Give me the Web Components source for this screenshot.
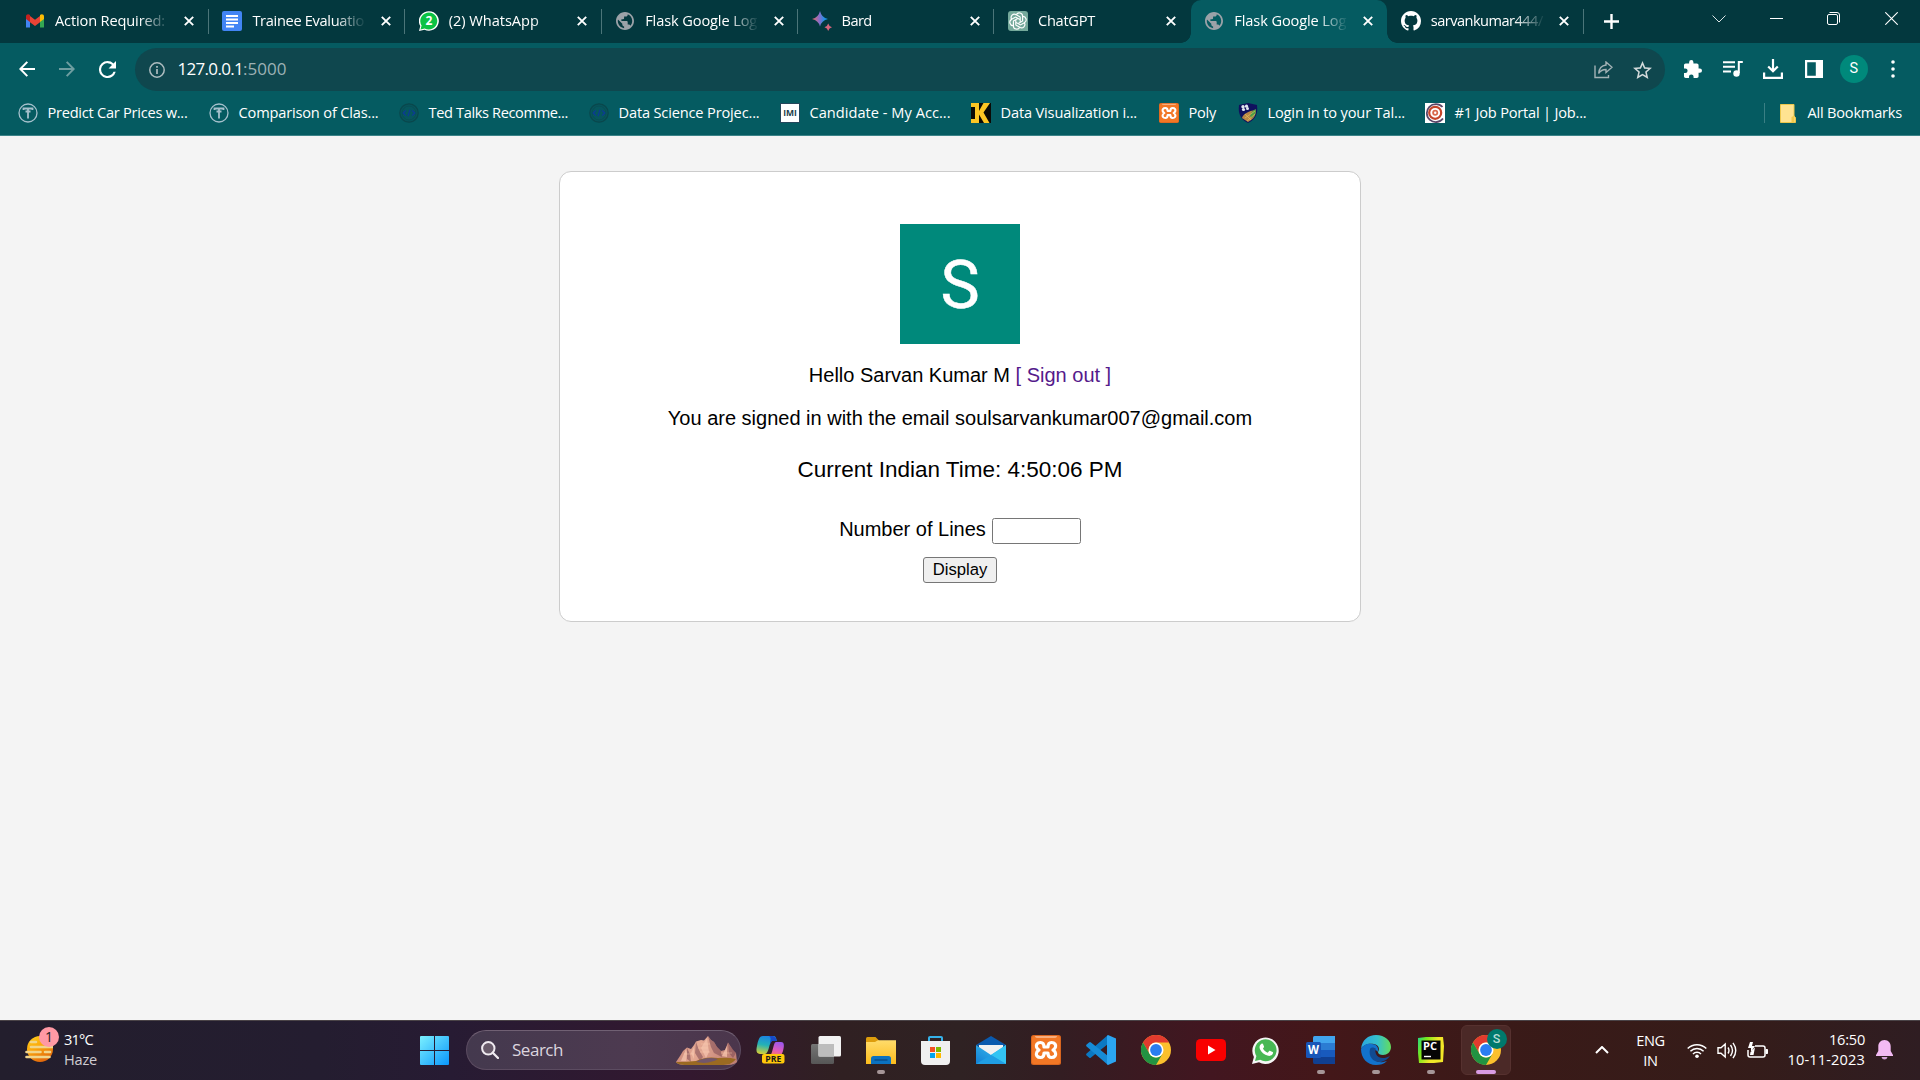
<!DOCTYPE html>
<html lang="en">
<head>
<meta charset="utf-8">
<title>Flask Google Login</title>
<style>
html,body{margin:0;height:100%;overflow:hidden}
body{font-family:"Open Sans","Noto Sans",sans-serif;width:1920px;height:1080px}
</style>
</head>
<body>
<desktop-screen></desktop-screen>
<script>
const GLOBE = '<path fill="#9ba2a8" d="M12 2C6.480 2 2 6.480 2 12s4.480 10 10 10 10-4.480 10-10S17.520 2 12 2zm-1 17.930c-3.950-.49-7-3.850-7-7.930 0-.62.080-1.210.210-1.790L9 15v1c0 1.100.9 2 2 2v1.930zm6.900-2.540c-.26-.81-1-1.390-1.900-1.390h-1v-3c0-.55-.45-1-1-1H8v-2h2c.55 0 1-.45 1-1V7h2c1.100 0 2-.9 2-2v-.41c2.930 1.190 5 4.060 5 7.410 0 2.080-.8 3.970-2.100 5.390z"/>';
const ICONS = {
  gmail: ['0 0 20 20', '<path d="M1 6v10.500h4V9z" fill="#4285f4"/><path d="M19 6v10.500h-4V9z" fill="#34a853"/><path d="M5 5v6.300l5 3.700 5-3.700V5l-5 3.800z" fill="#ea4335"/><path d="M1 5.500C1 3 3.500 2.500 5 4v7L1 8z" fill="#c5221f"/><path d="M19 5.500C19 3 16.500 2.500 15 4v7l4-3z" fill="#fbbc04"/>'],
  docs: ['0 0 20 20', '<rect width="20" height="20" rx="2" fill="#4285f4"/><path d="M4 5h12M4 8.500h12M4 12h12M4 15.500h8" stroke="#fff" stroke-width="2"/>'],
  wa2: ['0 0 20 20', '<path d="M0 20l1.300-5A10 9.700 0 1 1 5.500 18.700z" fill="#fff"/><path d="M1.500 18.500l1.100-4A8.500 8.500 0 1 1 5.700 17.400z" fill="#0ac244"/><text x="10" y="14.200" text-anchor="middle" font-family="Open Sans" font-size="12" font-weight="700" fill="#fff">2</text>'],
  globe: ['2 2 20 20', GLOBE],
  bard: ['0 0 20 20', '<defs><linearGradient id="g" x1="0" x2="1"><stop stop-color="#e86a62"/><stop offset=".45" stop-color="#8a6ec9"/><stop offset=".8" stop-color="#1b92e8"/></linearGradient></defs><path d="M8 0q1.500 6.500 8 8-6.500 1.500-8 7.500Q6.500 9.500 0 8q6.500-1.500 8-8z" fill="url(#g)"/><path d="M16.200 12.500q.8 3 3.800 3.800-3 .8-3.800 3.700-.8-2.900-3.700-3.700 2.900-.8 3.700-3.800z" fill="#d5657c"/>'],
  gpt: ['0 0 20 20', '<path d="M3 0h14a3 3 0 0 1 3 3v17H3a3 3 0 0 1-3-3V3a3 3 0 0 1 3-3z" fill="#74a99b"/><g fill="none" stroke="#fff" stroke-width="1.150">' + [0, 60, 120, 180, 240, 300].map(r => `<path transform="rotate(${r} 10 10)" d="M8.300 3.800a3.300 3.300 0 0 1 6.300 1.500v4.600l-4.300 2.500"/>`).join('') + '</g>'],
  github: ['0 0 16 16', '<path fill="#fff" d="M8 0C3.580 0 0 3.580 0 8c0 3.540 2.290 6.530 5.470 7.590.4.070.55-.17.55-.38 0-.19-.01-.82-.01-1.490-2.010.37-2.530-.49-2.690-.94-.09-.23-.48-.94-.82-1.130-.28-.15-.68-.52-.01-.53.63-.01 1.080.58 1.230.82.72 1.210 1.870.87 2.330.66.07-.52.28-.87.51-1.070-1.780-.2-3.640-.89-3.640-3.950 0-.87.31-1.590.82-2.150-.08-.2-.36-1.020.08-2.120 0 0 .67-.21 2.200.82.64-.18 1.320-.27 2-.27s1.360.09 2 .27c1.530-1.040 2.200-.82 2.200-.82.44 1.100.16 1.920.08 2.120.51.56.82 1.270.82 2.150 0 3.070-1.870 3.750-3.650 3.950.29.25.54.73.54 1.480 0 1.070-.01 1.930-.01 2.200 0 .21.15.46.55.38A8.010 8.010 0 0 0 16 8c0-4.420-3.580-8-8-8z"/>'],
  x: ['0 0 10 10', '<path d="M.8.800l8.400 8.400M9.200.800L.8 9.200" stroke="#fff" stroke-width="1.900"/>'],
  plus: ['0 0 15 15', '<path d="M7.500 0v15M0 7.500h15" stroke="#fff" stroke-width="2.400"/>'],
  chev: ['0 0 14 8', '<path d="M.5.500L7 7 13.500.500" fill="none" stroke="#dbe5e6" stroke-width="1"/>'],
  min: ['0 0 13 13', '<path d="M0 6.500h13" stroke="#fff" stroke-width="1"/>'],
  max: ['0 0 13 13', '<rect x=".5" y="2.500" width="10" height="10" rx="1.500" fill="none" stroke="#fff"/><path d="M2.500.500H10a2.500 2.500 0 0 1 2.500 2.500v7.500" fill="none" stroke="#fff"/>'],
  wclose: ['0 0 13 13', '<path d="M.3.300l12.400 12.400M12.700.300L.3 12.700" stroke="#fff" stroke-width="1.100"/>'],
  back: ['0 0 16 16', '<path d="M16 8H1.500M8.300.900L1.300 8l7 7.100" fill="none" stroke="#fff" stroke-width="2"/>'],
  fwd: ['0 0 16 16', '<path d="M0 8h14.500M7.700.900l7 7.100-7 7.100" fill="none" stroke="#6f9ea1" stroke-width="2"/>'],
  reload: ['4 4 16 16', '<path fill="#fff" d="M17.650 6.350A7.960 7.960 0 0 0 12 4a8 8 0 1 0 7.730 10h-2.080A6 6 0 1 1 12 6c1.660 0 3.140.69 4.220 1.780L13 11h7V4z"/>'],
  info: ['0 0 16 16', '<circle cx="8" cy="8" r="7.200" fill="none" stroke="#aebdc0" stroke-width="1.500"/><path d="M8 7v5M8 4v1.700" stroke="#aebdc0" stroke-width="1.700"/>'],
  share: ['0 0 19 18', '<path d="M1 4.500V16.500h13.500V14M12 1l6 5.300-6 5.200V8.500C8.500 8.500 6.300 9.800 4.700 12.500 5 8 7.500 4.500 12 4z" fill="none" stroke="#a3b2b5" stroke-width="1.400"/>'],
  star: ['2 2 20 19', '<path fill="#d2dadb" d="M22 9.240l-7.190-.62L12 2 9.190 8.630 2 9.240l5.460 4.730L5.820 21 12 17.270 18.180 21l-1.630-7.030zM12 15.400l-3.760 2.270 1-4.280-3.320-2.880 4.380-.38L12 6.100l1.710 4.040 4.380.38-3.320 2.880 1 4.280z"/>'],
  puzzle: ['2 1 21 21', '<path fill="#fff" d="M20.500 11H19V7c0-1.100-.9-2-2-2h-4V3.500a2.500 2.500 0 0 0-5 0V5H4c-1.100 0-2 .9-2 2v3.800h1.500a2.700 2.700 0 0 1 0 5.400H2V20c0 1.100.9 2 2 2h3.800v-1.500a2.700 2.700 0 0 1 5.400 0V22H17c1.100 0 2-.9 2-2v-4h1.500a2.500 2.500 0 0 0 0-5z"/>'],
  music: ['0 0 20 16', '<path d="M0 1.200h12M0 5.800h12M0 10.500h8" stroke="#fff" stroke-width="1.900"/><path d="M15.800 12V1h4" fill="none" stroke="#fff" stroke-width="2"/><circle cx="13.500" cy="12.500" r="3.200" fill="#fff"/>'],
  download: ['0 0 20 20', '<path d="M10 0v12M5.200 7.500L10 12.300l4.800-4.800" fill="none" stroke="#fff" stroke-width="2.200"/><path d="M1.100 13.500v5.300h17.800v-5.300" fill="none" stroke="#fff" stroke-width="2.200"/>'],
  panel: ['0 0 18 18', '<path fill="#fff" d="M0 0h18v18H0zM2.200 2.200v13.600h8.600V2.200z" fill-rule="evenodd"/>'],
  dots: ['0 0 4 18', '<circle cx="2" cy="2" r="1.800" fill="#fff"/><circle cx="2" cy="9" r="1.800" fill="#fff"/><circle cx="2" cy="16" r="1.800" fill="#fff"/>'],
  tds: ['0 0 20 20', '<circle cx="10" cy="10" r="9" fill="none" stroke="#a5c0cc" stroke-width="1.300"/><path d="M5.500 7V5.500h9V7M10 6v9.500M7.500 8.500H10M10 8.500h2.500" fill="none" stroke="#a5c0cc" stroke-width="1.800"/>'],
  code: ['0 0 20 20', '<circle cx="10" cy="10" r="9.200" fill="#06565d" stroke="#0a474c" stroke-width="1.200"/><circle cx="10" cy="10" r="7" fill="none" stroke="#0a4a50" stroke-width=".8"/><path d="M6.800 7.500L4.200 10l2.600 2.500M13.200 7.500L15.800 10l-2.600 2.500M11 6.800L9 13.200" fill="none" stroke="#0c3a96" stroke-width="1.200"/>'],
  imi: ['0 0 20 20', '<rect x=".5" y=".5" width="19" height="19" fill="#fff" stroke="#24465b"/><text x="10" y="13.200" text-anchor="middle" font-family="Open Sans" font-size="8.500" font-weight="700" fill="#203c4a">IMI</text>'],
  k: ['0 0 20 20', '<path d="M0 0h20v20H0z" fill="#0b0a06"/><path d="M0 0h8v8l4.500-8H19l-6.500 9.500L18.500 20H13L8 11.500V20H0v-4h4V4H0z" fill="#fcc624"/>'],
  xampp: ['0 0 30 30', '<rect width="30" height="30" rx="2.500" fill="#d9651f"/><rect x="1" y="1" width="28" height="28" rx="2" fill="#f27725"/><path d="M4 1h22q0 2-3 2H7Q4 3 4 1z" fill="#f8ad7d"/><path d="M9.500 7.500C6 7.500 5 10 5.500 12 5.800 13.500 7 14.200 8 15 7 15.800 5.800 16.500 5.500 18 5 20 6 22.500 9.500 22.500 12.500 22.500 13 20 13 18h4c0 2 .5 4.500 3.500 4.500 3.500 0 4.500-2.500 4-4.500-.3-1.500-1.500-2.200-2.500-3 1-.8 2.200-1.500 2.500-3 .5-2-.5-4.500-4-4.500C17.500 7.500 17 10 17 12h-4c0-2-.5-4.500-3.500-4.500z" fill="none" stroke="#fff" stroke-width="3.200" stroke-linejoin="round"/>'],
  shield: ['0 0 20 20', '<path d="M1 2l9-2 9 2c1 8-1 14-9 18C2 16 0 10 1 2z" fill="#10105e"/><path d="M4 15c1-4 6-7 14-8 0 5-2 9-8 12z" fill="#b98545"/><path d="M12 13c1-4 3-6 6-7 0 4-1 6-4 9z" fill="#4c9d46"/><path d="M7 15l10-7M9 18l8-7M7 11l6 6" stroke="#e5bc59" stroke-width=".7"/><g fill="#dfe6ef"><circle cx="5" cy="3.700" r="1.700"/><circle cx="8.500" cy="3.200" r="1.600"/><circle cx="9.500" cy="5.500" r="1.500"/><circle cx="5.500" cy="6.500" r="1.600"/></g>'],
  job: ['0 0 20 20', '<path d="M0 0h20v20H0z" fill="#fff"/><path d="M17.500 4A9 9 0 1 0 18 15.500" fill="none" stroke="#5a4668" stroke-width="1.800"/><circle cx="10.200" cy="9.800" r="6" fill="none" stroke="#c5452a" stroke-width="2.200"/><circle cx="10.200" cy="9.800" r="3" fill="#d9694c"/><circle cx="10.200" cy="9.800" r="1.200" fill="#fff"/>'],
  folder: ['0 0 16 19', '<path d="M.5.500h13.500V12l1.500 1.500V18.500H.5z" fill="#ffe391" stroke="#edc74b"/><path d="M11.500 18v-5l3-1.500v6.500z" fill="#f3ca4b"/>'],
  weather: ['0 0 28 28', '<defs><linearGradient id="g" x1="0" y1="0" x2=".5" y2="1"><stop stop-color="#ffd21c"/><stop offset=".5" stop-color="#fba70c"/><stop offset="1" stop-color="#e36a0c"/></linearGradient></defs><circle cx="15" cy="14" r="13" fill="url(#g)"/><path d="M6 7h5M6 12h23M1.500 17h14M20 17h5M1.500 22h23" stroke="#f1d58b" stroke-width="2.600" stroke-linecap="round"/>'],
  win: ['0 0 29 29', '<defs><linearGradient id="g" x1="0" y1="0" x2="1" y2="1"><stop stop-color="#7bf0ff"/><stop offset="1" stop-color="#0a96fb"/></linearGradient></defs><path d="M1 0h13v14H0V1a1 1 0 0 1 1-1zM15 0h13a1 1 0 0 1 1 1v13H15zM0 15h14v14H1a1 1 0 0 1-1-1zM15 15h14v13a1 1 0 0 1-1 1H15z" fill="url(#g)"/>'],
  search: ['0 0 18 18', '<circle cx="7.300" cy="7.300" r="6.200" fill="#685a6a" stroke="#efeaf0" stroke-width="2"/><path d="M11.800 11.800l5.200 5.200" stroke="#efeaf0" stroke-width="2.300" stroke-linecap="round"/>'],
  mountain: ['0 0 61 29', '<defs><linearGradient id="g" x1="0" y1="0" x2="1" y2=".2"><stop stop-color="#b8746a"/><stop offset=".4" stop-color="#e6aa94"/><stop offset="1" stop-color="#c08075"/></linearGradient></defs><path d="M0 26L4 20 7 15 11 11.500 15 13 18 9 20 5.500 25 4 28 4.500 32 0 35 4 38 6 41 11 45 15 49 14 52 6.500 55 11 57 14 60 17 61 26c-3 3-8 3-14 3H10C5 29 1 28 0 26z" fill="url(#g)"/><path d="M32 0l3 4 3 2 3 5 4 4 1 6-8-4-3-6zM20 6l3 8 4 7-3 4-5-8zM52 7l3 4 5 6-3 5-4-5zM11 12l3 6 1 8-4-3z" fill="#7e4a54" opacity=".55"/><path d="M10 13l-5 12h5l1-8zM31 2l-6 10 5 10 3-6zM51 10l-5 10 5 1zM18 11l-3 6 3 6z" fill="#f2c1aa" opacity=".8"/><path d="M25 8h9M22 12h10M45 17h11M8 18h10M24 16h10" stroke="#fac9ac" stroke-width=".8" opacity=".6"/><path d="M0 26q10 0 20-1 10-5 22-3 10-1 18 1c-4 5-8 6-15 6H10c-5 0-9-1-10-3z" fill="#9a6a22"/><path d="M20 26q10-6 22-3-5 3-14 4z" fill="#72566a"/>'],
  copilot: ['0 0 29 28', '<defs><linearGradient id="g" x1=".5" y1="0" x2=".3" y2="1"><stop stop-color="#1b83e3"/><stop offset=".5" stop-color="#24b2b6"/><stop offset="1" stop-color="#d5cf37"/></linearGradient><linearGradient id="h" x1=".6" y1="0" x2=".3" y2="1"><stop stop-color="#9c57ee"/><stop offset=".6" stop-color="#e45bb5"/><stop offset="1" stop-color="#fd7d5b"/></linearGradient></defs><path d="M7 0h10c3 0 3 2 4 5h-5c-3 1-3 13-7 13H4c-4 0-4-4-3-8C2 5 3 0 7 0z" fill="url(#g)"/><path d="M15 0c4 0 5 2 6 5h-5l-2 3c0-3 2-6-1-8z" fill="#1749c9"/><path d="M20 6h5c4 0 3 5 2 9-1 3-2 5-5 5h-9c4 0 4-14 7-14z" fill="url(#h)"/><rect x="6" y="18" width="22.500" height="9.500" rx="2" fill="#ffc80a"/><text x="17.300" y="25.800" text-anchor="middle" textLength="16" lengthAdjust="spacingAndGlyphs" font-family="Open Sans" font-size="8.500" font-weight="700" fill="#191919">PRE</text>'],
  taskview: ['0 0 30 28', '<defs><linearGradient id="g" x2="0" y2="1"><stop stop-color="#757575"/><stop offset="1" stop-color="#565656"/></linearGradient></defs><rect y="8" width="23" height="20" rx="1.500" fill="url(#g)"/><rect x="7.500" y="0" width="22.500" height="20.500" rx="1.500" fill="#f2f2f2"/><path d="M7.500 8H23v12.500H7.500z" fill="#bdbdbd"/>'],
  explorer: ['0 0 30 27', '<defs><linearGradient id="g" x2="0" y2="1"><stop stop-color="#ffdc6b"/><stop offset="1" stop-color="#fcbc1c"/></linearGradient></defs><path d="M0 1.500Q0 0 1.500 0h8l3.500 3.500V8H0z" fill="#dd9d0c"/><path d="M0 5h9l3-1.800h18V27H0z" fill="url(#g)"/><path d="M5 27v-5.500q0-2.500 2.500-2.500h15q2.500 0 2.500 2.500V27z" fill="#0b72c0"/><path d="M8.500 23h13" stroke="#07457f" stroke-width="1.200"/>'],
  store: ['0 0 29 29', '<path d="M8 6V1.800Q8 1 9 1h11q1 0 1 .8V6" fill="none" stroke="#35b1e8" stroke-width="2"/><path d="M0 5h29v20q0 4-4 4H4q-4 0-4-4z" fill="#f0f0f0"/><path d="M9 11h5v5H9z" fill="#f25022"/><path d="M15 11h5v5h-5z" fill="#7fba00"/><path d="M9 17h5v5H9z" fill="#00a4ef"/><path d="M15 17h5v5h-5z" fill="#ffb900"/>'],
  mail: ['0 0 30 28', '<defs><linearGradient id="g" x1="1" x2="0" y1="0" y2="1"><stop stop-color="#3dc4f2"/><stop offset="1" stop-color="#127fd4"/></linearGradient></defs><path d="M0 9L15 0l15 9-15 8z" fill="#0a5aae"/><path d="M3 9h24v6l-12 6L3 15z" fill="#f1f1f1"/><path d="M0 9l15 10L30 9v19H0z" fill="url(#g)"/><path d="M15 19l15 9V9z" fill="#33c4f3"/><path d="M15 19L30 28H0z" fill="#209ee4"/>'],
  vscode: ['0 0 30 30', '<path d="M22 0v9L5 22.500q-1 1-2 0L.6 20.400q-1-1 0-2z" fill="#0b78c2"/><path d="M22 30v-9L5 7.500q-1-1-2 0L.6 9.600q-1 1 0 2z" fill="#168bd6"/><path d="M22 0l8 3.500v23L22 30l-1-1V1z" fill="#2ba5f1"/>'],
  chrome: ['0 0 30 30', '<circle cx="15" cy="15" r="15" fill="#fbc02d"/><path d="M2 7.500A15 15 0 0 1 28 7.500H15a7.500 7.500 0 0 0-6.500 11.200z" fill="#e23b2e"/><path d="M2 7.500A15 15 0 0 0 15 30l6.500-11.200A7.500 7.500 0 0 1 8.500 18.700z" fill="#229342"/><circle cx="15" cy="15" r="7.500" fill="#fff"/><circle cx="15" cy="15" r="5.900" fill="#2a7df0"/>'],
  youtube: ['0 0 30 22', '<rect width="30" height="22" rx="4.500" fill="#f90000"/><path d="M12 6.500v9l7.500-4.500z" fill="#fff"/>'],
  whatsapp: ['0 0 27 27', '<path d="M0 27l1.900-7A13.200 13.200 0 1 1 7 25.200z" fill="#f6f6f6"/><path d="M3 24l1.400-5A10.900 10.900 0 1 1 8.200 22.700z" fill="#47b854"/><path d="M9.500 6.800c.5-.5 1.200-.4 1.500.2l1 2.400c.2.500 0 .9-1 2 1 2 2.600 3.400 4.800 4.300l1.300-1.600c.4-.4.700-.4 1.200-.2l2.300 1.100c.5.300.6.700.4 1.300-.7 2-2.800 3-4.800 2.500-4.200-1-7-3.700-8.300-6.800-.8-2-.2-4 1.600-5.200z" fill="#fff"/>'],
  word: ['0 0 29 28', '<path d="M7 1.500Q7 0 8.500 0H29v8H7z" fill="#41a5ee"/><path d="M7 7h22v7H7z" fill="#2b7cd3"/><path d="M7 14h22v7H7z" fill="#185abd"/><path d="M7 21h22v7H8.500Q7 28 7 26z" fill="#103f91"/><rect y="6" width="15" height="16" rx="1.500" fill="#1856b8"/><text x="7.500" y="18" text-anchor="middle" textLength="11" lengthAdjust="spacingAndGlyphs" font-family="Open Sans" font-size="12" font-weight="700" fill="#fff">W</text>'],
  edge: ['0 0 30 30', '<defs><linearGradient id="g"><stop stop-color="#2aa5df"/><stop offset=".55" stop-color="#35c1cc"/><stop offset="1" stop-color="#64dc5c"/></linearGradient></defs><path d="M0 14C1 5 7 0 15 0c9 0 15 6 15 12 0 5-4 8-8 8-3 0-5-1-5-3 2-3 1-7-4-8C7 8 2 10 0 14z" fill="url(#g)"/><path d="M0 14c2-4 6-6 11-5 4 0 7 3 6 8-2-3-6-2-6 2 0 6 6 9 11 8l4-1c-3 3-7 4-11 4C6 30 0 23 0 14z" fill="#1272cc"/><path d="M9 14c-2 8 4 14 11 13 4-1 7-3 9-6-5 3-12 3-14-2-1-3-1-4 0-5-2-2-5-2-6 0z" fill="#114a91"/>'],
  pycharm: ['0 0 26 26', '<defs><linearGradient id="g" x1="0" y1="0" x2="1" y2=".4"><stop stop-color="#21d789"/><stop offset=".3" stop-color="#77e81b"/><stop offset=".7" stop-color="#f2e728"/></linearGradient></defs><path d="M0 1l8-1h17l1 9-1 16-9 1H1L0 16z" fill="url(#g)"/><path d="M3.500 3.500h19v19h-19z" fill="#050505"/><path d="M6 19.500h7" stroke="#fff" stroke-width="1.400"/><text x="5" y="13" textLength="14" lengthAdjust="spacingAndGlyphs" font-family="Open Sans" font-size="10.500" font-weight="700" fill="#fff">PC</text>'],
  up: ['0 0 14 8', '<path d="M1 7l6-6 6 6" fill="none" stroke="#fff" stroke-width="2"/>'],
  wifi: ['0 0 20 15', '<g fill="none" stroke="#fff" stroke-width="1.500"><path d="M.7 5.500a13.200 13.200 0 0 1 18.600 0M3.400 8.300a9.300 9.300 0 0 1 13.200 0M6 11a5.600 5.600 0 0 1 8 0"/></g><circle cx="10" cy="13.200" r="1.800" fill="#fff"/>'],
  sound: ['0 0 20 17', '<path d="M1 5.800h3L8.200 2v13L4 11.200H1zM11 5.500q2 3 0 6M13.500 3q4 5.500 0 11M16 .800q5.500 7.700 0 15.400" fill="none" stroke="#fff" stroke-width="1.400"/>'],
  battery: ['0 0 21 17', '<path d="M8 4h8q2 0 2 2v7q0 2-2 2H3q-2 0-2-2V8" fill="none" stroke="#fff" stroke-width="1.500"/><path d="M19 7.500h1.500v4H19z" fill="#fff" stroke="#fff"/><path d="M3 0L1 6h3v4l4-6H5l1-4zM3.500 10L8 5.500 6.500 13H3z" fill="#fff"/>'],
  bell: ['0 0 17 20', '<path d="M8.500 0c4 0 6.200 3 6.200 6.500V11l2.300 4v1H0v-1l2.300-4V6.500C2.300 3 4.500 0 8.500 0z" fill="#f3baf3"/><path d="M5.500 17h6q-.6 2.500-3 2.500t-3-2.500z" fill="#d6a1d8"/>'],
};
const icon = (n, w, h) => `<ui-icon name="${n}" w="${w}" h="${h || w}"></ui-icon>`;
const fit = (t, w) => `<fit-text w="${w}">${t}</fit-text>`;
function define(name, render) {
  customElements.define(name, class extends HTMLElement {
    connectedCallback() {
      if (this.shadowRoot) return;
      const t = document.createElement('template');
      t.innerHTML = render(this);
      this.attachShadow({ mode: 'open' }).append(t.content.cloneNode(true));
    }
  });
}
define('desktop-screen', () => `<style>:host{display:flex;flex-direction:column;width:1920px;height:1080px}</style>
<tab-strip></tab-strip><nav-bar></nav-bar><bookmark-bar></bookmark-bar><web-page></web-page><task-bar></task-bar>`);

const TABS = [['gmail', 'Action Required:', 110], ['docs', 'Trainee Evaluatio', 111.5], ['wa2', '(2) WhatsApp', 90], ['globe', 'Flask Google Log', 112], ['bard', 'Bard', 30], ['gpt', 'ChatGPT', 57], ['globe', 'Flask Google Log', 112, 'on'], ['github', 'sarvankumar444/', 112]];
define('tab-strip', () => `<style>
:host{display:flex;height:43px;background:#03383e;padding-left:12.500px;box-sizing:border-box;color:#fff}
.new{width:55px;display:flex;align-items:center;justify-content:center}
.win{margin-left:auto;display:flex;width:230px;height:37px}
.win span{width:57.500px;display:flex;align-items:center;justify-content:center}
</style>${TABS.map((t, i) => `<browser-tab icon="${t[0]}" label="${t[1]}" w="${t[2]}" ${t[3] ? 'active' : ''} ${i === 0 ? 'first' : ''} ${i === 5 || i === 6 ? 'nosep' : ''}></browser-tab>`).join('')}
<span class="new">${icon('plus', 15)}</span><div class="win"><span>${icon('chev', 14, 8)}</span><span>${icon('min', 13)}</span><span>${icon('max', 13)}</span><span>${icon('wclose', 13)}</span></div>`);
define('browser-tab', e => `<style>
:host{display:flex;align-items:center;width:196.400px;height:43px;box-sizing:border-box;padding-left:13.500px;font-size:14.600px;position:relative}
:host([first]){padding-left:12.500px}
.ic{width:20px;display:flex;justify-content:center;flex:none;margin-top:-1px}
.t{width:114px;margin-left:10px;overflow:hidden;line-height:22px;height:22px;margin-top:-3px;-webkit-mask-image:linear-gradient(90deg,#000 74%,rgba(0,0,0,.1) 98%)}
.c{width:20px;margin-left:10.500px;display:flex;justify-content:center;margin-top:-1px}
.s{width:1px;height:25px;background:#4b7579;margin-left:8.500px}
:host([nosep]) .s{visibility:hidden}
:host([active]){background:#055b61;border-radius:10px 10px 0 0}
:host([active])::before,:host([active])::after{content:"";position:absolute;bottom:0;width:10px;height:10px}
:host([active])::before{left:-10px;background:radial-gradient(circle at 0 0,transparent 9.500px,#055b61 10px)}
:host([active])::after{right:-10px;background:radial-gradient(circle at 100% 0,transparent 9.500px,#055b61 10px)}
</style><span class="ic">${icon(e.getAttribute('icon'), e.getAttribute('icon') === 'globe' ? 18 : 20)}</span><span class="t">${fit(e.getAttribute('label'), e.getAttribute('w'))}</span><span class="c">${icon('x', 10)}</span><span class="s"></span>`);
define('nav-bar', () => `<style>
:host{display:flex;align-items:center;height:53px;background:#055b61;color:#fff;box-sizing:border-box;padding-left:7px}
.b{width:40px;display:flex;justify-content:center;margin-top:-1px}
.omni{display:flex;align-items:center;height:43px;width:1530px;background:#0f474e;border-radius:22px;margin-left:8px;box-sizing:border-box;padding:0 13px 0 14px;font-size:17px}
.url{margin-left:12.500px;flex:1;display:flex;line-height:24px;margin-top:-1px}
.port{color:#9db2b5}
.acts{display:flex;gap:20px}
.right{display:flex;margin-left:7.500px}
.right .b{width:40.300px;align-items:center}
.av{width:28px;height:28px;border-radius:50%;background:#00897b;font:14.500px/28px Roboto,sans-serif;text-align:center}
</style><span class="b">${icon('back', 16)}</span><span class="b">${icon('fwd', 16)}</span><span class="b">${icon('reload', 17)}</span>
<div class="omni">${icon('info', 16)}<div class="url">${fit('127.0.0.1', 65.5)}<span class="port">${fit(':5000', 43.5)}</span></div><div class="acts">${icon('share', 19, 18)}${icon('star', 19, 18)}</div></div>
<div class="right"><span class="b">${icon('puzzle', 18)}</span><span class="b">${icon('music', 20, 16)}</span><span class="b">${icon('download', 20)}</span><span class="b">${icon('panel', 18)}</span><span class="b"><span class="av">S</span></span><span class="b" style="width:38px">${icon('dots', 4, 18)}</span></div>`);

const MARKS = [['tds', 'Predict Car Prices w...', 140, 191], ['tds', 'Comparison of Clas...', 140, 190], ['code', 'Ted Talks Recomme...', 139.5, 190], ['code', 'Data Science Projec...', 141, 191], ['imi', 'Candidate - My Acc...', 141, 191], ['k', 'Data Visualization i...', 136.5, 188], ['xampp', 'Poly', 27.5, 79], ['shield', 'Login in to your Tal...', 137.5, 187], ['job', '#1 Job Portal | Job...', 132, 180]];
define('bookmark-bar', () => `<style>
:host{display:flex;align-items:center;height:40px;background:#055b61;border-bottom:1px solid #3b8388;box-sizing:border-box;padding:0 18px;color:#fff;font-size:14.600px}
.m{display:flex;align-items:center;gap:10px;flex:none;line-height:22px;margin-top:-5px}
.m fit-text{margin:-3px 0 0 -.5px}
.all{margin-left:auto;display:flex;align-items:center;gap:12px;line-height:22px;margin-top:-5px}
.all fit-text{margin-top:-3px}
.all i{width:1px;height:20px;background:#3a7f84;margin-right:3px}
</style>${MARKS.map(m => `<div class="m" style="width:${m[3]}px">${icon(m[0], 20)}${fit(m[1], m[2])}</div>`).join('')}
<div class="all"><i></i>${icon('folder', 16, 19)}${fit('All Bookmarks', 94.5)}</div>`);

define('web-page', () => `<style>
:host{display:flex;flex:1;justify-content:center;align-items:flex-start;background:#f4f4f4;padding-top:35px;box-sizing:border-box}
</style><profile-card></profile-card>`);
define('profile-card', () => `<style>
:host{display:flex;flex-direction:column;align-items:center;box-sizing:border-box;width:802px;height:451px;background:#fff;border:1px solid #ccc;border-radius:12px;padding-top:52px;font:20px/23px "Liberation Sans",Arial,sans-serif;color:#000}
.av{width:120px;height:120px;background:#00897b;color:#fff;font:66px/124px Roboto,sans-serif;text-align:center;-webkit-text-stroke:.5px #fff}
p{margin:20px 0 0}
a{color:#551a8b;text-decoration:none}
.time{font-size:22.500px;line-height:26px;margin-top:27px}
.row{display:flex;align-items:center;gap:6px;margin-top:35px;height:26px}
.row span{margin-top:-3px}
input{width:89px;height:26px;box-sizing:border-box;border:1px solid #767676;border-radius:2.500px;background:#fff;padding:1px 2px}
button{width:74px;height:26px;margin-top:13px;box-sizing:border-box;border:1px solid #767676;border-radius:3px;background:#efefef;color:#000;font:16.670px/20px "Liberation Sans",Arial,sans-serif;padding:0}
</style><div class="av">S</div><p>Hello Sarvan Kumar M <a>[ Sign out ]</a></p><p>You are signed in with the email soulsarvankumar007@gmail.com</p><p class="time">Current Indian Time: 4:50:06 PM</p><div class="row"><span>Number of Lines</span><input></div><button>Display</button>`);

const APPS = [['copilot', 29, 28], ['taskview', 30, 28], ['explorer', 30, 27, 1], ['store', 29, 29], ['mail', 30, 28], ['xampp', 30, 30], ['vscode', 30, 30], ['chrome', 30, 30], ['youtube', 30, 22], ['whatsapp', 27, 27], ['word', 29, 28, 1], ['edge', 30, 30, 1], ['pycharm', 26, 26, 1], ['chrome', 30, 30, 2]];
define('task-bar', () => `<style>
:host{display:flex;align-items:center;height:60px;flex:none;box-sizing:border-box;border-top:1px solid #4a4347;padding-bottom:1px;color:#fff;font-size:14.600px;line-height:20px;background:linear-gradient(90deg,#231e2d 0,#241d30 320px,#271b33 450px,#33182f 690px,#302022 840px,#2f2223 960px,#331d22 1060px,#421620 1210px,#431719 1330px,#3a1a18 1500px,#351c19 1730px,#2f1d22 1920px)}
.w{display:flex;width:420px;box-sizing:border-box;padding-left:25px;gap:11px;align-items:center;flex:none}
.wi{position:relative;width:28px;height:28px;margin-top:-2px}
.wi b{position:absolute;left:14px;top:-8px;width:20px;height:20px;border-radius:50%;background:#ff99a4;color:#222;font:14px/20px "Open Sans";text-align:center}
.tx{display:flex;flex-direction:column;margin-top:-3px}.tx small{font-size:14.600px;color:#cfccd2}
.se{display:flex;align-items:center;width:275px;height:40px;box-sizing:border-box;border-radius:20px;border:1px solid #5c4c61;border-top-color:#706073;background:linear-gradient(90deg,#44394e,#4d3a50 60%,#4b364c);margin-left:17px;padding:0 3px 0 14px;font-size:17px;color:#dcd5df}
.se fit-text{margin-left:13px;flex:1;line-height:24px}
.apps{display:flex;margin-left:2px}
.tray{display:flex;align-items:center;margin-left:auto;padding-right:27px}
.r{text-align:right;align-items:flex-end}
</style><div class="w"><div class="wi">${icon('weather', 28)}<b>1</b></div><div class="tx">${fit('31°C', 29)}<small>${fit('Haze', 33)}</small></div></div>
${icon('win', 29)}<div class="se">${icon('search', 18)}${fit('Search', 51)}${icon('mountain', 61, 29)}</div>
<div class="apps">${APPS.map(a => `<task-app icon="${a[0]}" w="${a[1]}" h="${a[2]}" state="${a[3] || 0}"></task-app>`).join('')}</div>
<div class="tray">${icon('up', 14, 8)}<div class="tx" style="width:28px;margin:-1px 22px 0 28px;align-items:center">${fit('ENG', 28.5)}${fit('IN', 14.5)}</div>
<div style="display:flex;gap:10px;align-items:center">${icon('wifi', 20, 15)}${icon('sound', 20, 17)}${icon('battery', 21, 17)}</div>
<div class="tx r" style="margin:-3px 11px 0 20px">${fit('16:50', 36)}${fit('10-11-2023', 77.5)}</div>${icon('bell', 17, 20)}</div>`);
define('task-app', e => `<style>
:host{display:flex;width:55px;height:58px;align-items:center;justify-content:center;position:relative}
.box{display:flex;width:50px;height:50px;box-sizing:border-box;align-items:center;justify-content:center;border-radius:6px;position:relative;border:1px solid transparent}
:host([state="2"]) .box{background:#4b2927;border-color:#56312f}
.dot{position:absolute;left:50%;bottom:0;width:8px;height:4px;margin-left:-4px;border-radius:2px;background:#a69698}
:host([state="2"]) .dot{width:20px;margin-left:-10px;background:#d99ce3}
.bd{position:absolute;left:25px;top:3px;width:20px;height:20px;border-radius:50%;background:#00796c;color:#b9dcd5;font:500 12.500px/20px Roboto,sans-serif;text-align:center}
</style><div class="box">${icon(e.getAttribute('icon'), e.getAttribute('w'), e.getAttribute('h'))}${e.getAttribute('state') !== '0' ? '<span class="dot"></span>' : ''}${e.getAttribute('state') === '2' ? '<span class="bd">S</span>' : ''}</div>`);
define('ui-icon', e => {
  const [vb, body] = ICONS[e.getAttribute('name')], w = e.getAttribute('w'), h = e.getAttribute('h');
  return `<style>:host{display:block;flex:none;width:${w}px;height:${h}px}svg{display:block}</style><svg width="${w}" height="${h}" viewBox="${vb}">${body}</svg>`;
});
/* Spaces its letters so the run of text takes the width given in "w". */
customElements.define('fit-text', class extends HTMLElement {
  connectedCallback() {
    if (this.shadowRoot) return;
    const root = this.attachShadow({ mode: 'open' });
    root.innerHTML = '<style>:host{display:block;white-space:nowrap}span{display:inline-block;vertical-align:top}</style><span><slot></slot></span>';
    const s = root.querySelector('span');
    s.style.letterSpacing = (this.getAttribute('w') - s.getBoundingClientRect().width) / this.textContent.length + 'px';
  }
});
</script>
</body>
</html>
